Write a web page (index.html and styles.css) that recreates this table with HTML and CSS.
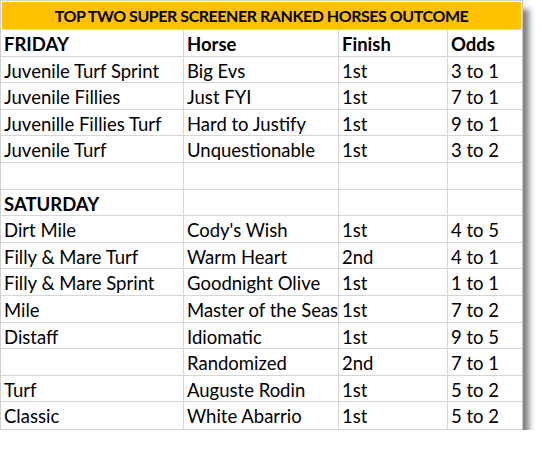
FILE: index.html
```html
<!DOCTYPE html>
<html>
<head>
<meta charset="utf-8">
<link rel="stylesheet" href="styles.css">
</head>
<body>
<div class="sheet">
  <div class="title">TOP TWO SUPER SCREENER RANKED HORSES OUTCOME</div>
  <div class="grid">
    <div class="c b">FRIDAY</div><div class="c b">Horse</div><div class="c b">Finish</div><div class="c b">Odds</div>
    <div class="c">Juvenile Turf Sprint</div><div class="c">Big Evs</div><div class="c">1st</div><div class="c">3 to 1</div>
    <div class="c">Juvenile Fillies</div><div class="c">Just FYI</div><div class="c">1st</div><div class="c">7 to 1</div>
    <div class="c">Juvenille Fillies Turf</div><div class="c">Hard to Justify</div><div class="c">1st</div><div class="c">9 to 1</div>
    <div class="c">Juvenile Turf</div><div class="c">Unquestionable</div><div class="c">1st</div><div class="c">3 to 2</div>
    <div class="c"></div><div class="c"></div><div class="c"></div><div class="c"></div>
    <div class="c b">SATURDAY</div><div class="c"></div><div class="c"></div><div class="c"></div>
    <div class="c">Dirt Mile</div><div class="c">Cody's Wish</div><div class="c">1st</div><div class="c">4 to 5</div>
    <div class="c">Filly &amp; Mare Turf</div><div class="c">Warm Heart</div><div class="c">2nd</div><div class="c">4 to 1</div>
    <div class="c">Filly &amp; Mare Sprint</div><div class="c">Goodnight Olive</div><div class="c">1st</div><div class="c">1 to 1</div>
    <div class="c">Mile</div><div class="c">Master of the Seas</div><div class="c">1st</div><div class="c">7 to 2</div>
    <div class="c">Distaff</div><div class="c">Idiomatic</div><div class="c">1st</div><div class="c">9 to 5</div>
    <div class="c"></div><div class="c">Randomized</div><div class="c">2nd</div><div class="c">7 to 1</div>
    <div class="c">Turf</div><div class="c">Auguste Rodin</div><div class="c">1st</div><div class="c">5 to 2</div>
    <div class="c">Classic</div><div class="c">White Abarrio</div><div class="c">1st</div><div class="c">5 to 2</div>
  </div>
</div>
</body>
</html>
```
FILE: styles.css
```css
html, body {
  margin: 0;
  padding: 0;
  background: #ffffff;
}
body {
  font-family: Lato, "Open Sans", sans-serif;
  color: #000;
}
.sheet {
  width: 523px;
  box-sizing: border-box;
  border: 1px solid #d0d0d0;
  border-right: 1px solid #c8c8c8;
  background: #fff;
  box-shadow: 7px 8px 6px -1px rgba(0,0,0,0.5);
}
.title {
  margin: 1px 1px 0 1px;
  height: 27px;
  background: #ffc000;
  font-weight: 700;
  font-size: 16px;
  letter-spacing: -0.45px;
  line-height: 27px;
  text-align: center;
  border-bottom: 1px solid #d4d4d4;
}
.grid {
  display: grid;
  grid-template-columns: 183px 155px 109px 74px;
  grid-auto-rows: 26.6px;
}
.c {
  box-sizing: border-box;
  border-right: 1px solid #d6d6d6;
  border-bottom: 1px solid #d6d6d6;
  padding: 1px 0 0 3px;
  font-size: 18.5px;
  line-height: 26px;
  white-space: nowrap;
  overflow: hidden;
}
.c:nth-child(4n) {
  border-right: none;
}
.grid .c:nth-last-child(-n+4) {
  border-bottom: none;
}
.b {
  font-weight: 700;
}
```
